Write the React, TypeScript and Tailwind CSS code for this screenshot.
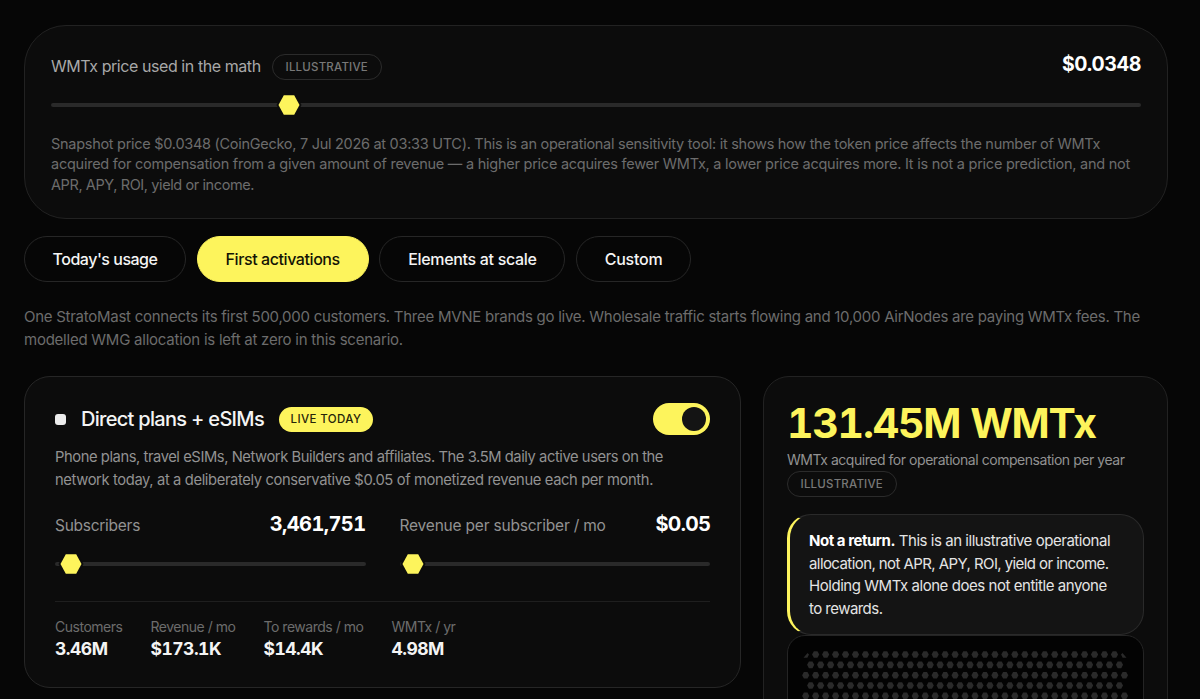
import React, { useState } from 'react';
import clsx from 'clsx';

const TABS = [
  { id: 'today', label: "Today's usage", style: 'w-[162px] tracking-[-0.5px]' },
  { id: 'first', label: 'First activations', style: 'w-[172px] tracking-[-0.42px]' },
  { id: 'scale', label: 'Elements at scale', style: 'w-[186px] tracking-[-0.32px]' },
  { id: 'custom', label: 'Custom', style: 'w-[115px] tracking-[-0.25px]' },
];

const STATS = [
  { label: 'Customers', value: '3.46M' },
  { label: 'Revenue / mo', value: '$173.1K' },
  { label: 'To rewards / mo', value: '$14.4K' },
  { label: 'WMTx / yr', value: '4.98M' },
];

const Line: React.FC<{ className?: string; children: React.ReactNode }> = ({ className, children }) => (
  <span className={clsx('block whitespace-nowrap', className)}>{children}</span>
);

const IllustrativeBadge: React.FC = () => (
  <span className="flex h-[26px] w-[109.5px] items-center justify-center rounded-full border border-[#2b2b2b] pt-px text-[11.5px] font-medium tracking-[0.2px] text-[#787878]">
    ILLUSTRATIVE
  </span>
);

// The thumb carries a card-coloured halo so the track looks cut around it
const Slider: React.FC<{ offset: number }> = ({ offset }) => (
  <div className="relative flex h-5 items-center">
    <div className="h-1 w-full rounded-full bg-[#2a2a2a]" />
    <svg className="absolute top-[-1px]" style={{ left: offset - 13 }} width="26" height="22" viewBox="0 0 26 22">
      <polygon points="0.5,11 7,-1 19,-1 25.5,11 19,23 7,23" fill="#0c0c0c" />
      <polygon points="2.5,11 7.8,1.2 18.2,1.2 23.5,11 18.2,20.8 7.8,20.8" fill="#fdf45c" />
    </svg>
  </div>
);

const hex = (cx: number, cy: number) =>
  `${cx - 3.6},${cy} ${cx - 1.8},${cy - 3.3} ${cx + 1.8},${cy - 3.3} ${cx + 3.6},${cy} ${cx + 1.8},${cy + 3.3} ${cx - 1.8},${cy + 3.3}`;

const HexField: React.FC = () => (
  <svg width="326" height="60" viewBox="0 0 326 60" fill="#2a2a2a">
    {[0, 1, 2, 3, 4, 5].map((row) =>
      Array.from({ length: row % 2 ? 32 : 33 }, (_, i) => {
        if (row === 0 && (i === 0 || i === 32)) return null;
        const cx = 3.7 + i * 9.96 + (row % 2 ? 4.98 : 0);
        return <polygon key={`${row}-${i}`} points={hex(cx, 4.5 + row * 10.35)} />;
      }),
    )}
    <polygon points="1.5,7.8 5.5,3 7,4.5 5.4,7.8" />
    <polygon points="324.5,7.8 320.5,3 319,4.5 320.6,7.8" />
  </svg>
);

const PriceCard: React.FC = () => (
  <section className="h-[194px] rounded-[42px] border border-[#222222] bg-[#0c0c0c] px-[26px] pt-[26px]">
    <div className="flex h-[30px] items-center justify-between">
      <div className="flex items-center gap-[11px]">
        <Line className="-mt-0.5 w-[210px] text-[16px] tracking-[-0.43px] text-[#a8a8a8]">WMTx price used in the math</Line>
        <IllustrativeBadge />
      </div>
      <Line className="-mt-1 text-[19.5px] font-bold tracking-[-0.55px] text-white">$0.0348</Line>
    </div>
    <div className="mt-[13px]">
      <Slider offset={237.5} />
    </div>
    <p className="mt-[19px] text-[14.5px] leading-[20.4px] text-[#6c6c6c]">
      <Line className="tracking-[-0.28px]">Snapshot price $0.0348 (CoinGecko, 7 Jul 2026 at 03:33 UTC). This is an operational sensitivity tool: it shows how the token price affects the number of WMTx</Line>
      <Line className="tracking-[-0.245px]">acquired for compensation from a given amount of revenue — a higher price acquires fewer WMTx, a lower price acquires more. It is not a price prediction, and not</Line>
      <Line className="tracking-[-0.4px]">APR, APY, ROI, yield or income.</Line>
    </p>
  </section>
);

const ScenarioTabs: React.FC = () => {
  const [active, setActive] = useState('first');

  return (
    <div className="mt-[17px] flex gap-[10.7px]">
      {TABS.map((tab) => (
        <button
          key={tab.id}
          onClick={() => setActive(tab.id)}
          className={clsx(
            'h-[46px] shrink-0 rounded-full border text-[16px] font-medium whitespace-nowrap',
            tab.style,
            active === tab.id ? 'border-[#fdf45c] bg-[#fdf45c] text-[#141405]' : 'border-[#262626] text-[#f4f4f4]',
          )}
        >
          {tab.label}
        </button>
      ))}
    </div>
  );
};

const PlansCard: React.FC = () => {
  const [enabled, setEnabled] = useState(true);

  return (
    <section className="h-[312px] w-[717px] rounded-[26px] border border-[#262626] bg-[#0c0c0c] px-[30px] pt-[26px]">
      <div className="flex h-8 items-center">
        <span className="h-[11px] w-[11px] rounded-[3px] bg-[#ececec]" />
        <Line className="ml-[15px] w-[184px] text-[20px] font-medium tracking-[-0.7px] text-[#f4f4f4]">Direct plans + eSIMs</Line>
        <span className="ml-[14px] flex h-[25px] w-[94px] items-center justify-center rounded-full bg-[#fdf45c] pt-px text-[11.5px] font-medium tracking-[0.4px] text-[#26240a]">
          LIVE TODAY
        </span>
        <button
          onClick={() => setEnabled(!enabled)}
          className={clsx(
            'ml-auto flex h-8 w-[57.5px] items-center rounded-full p-1',
            enabled ? 'justify-end bg-[#fdf45c]' : 'justify-start bg-[#2a2a2a]',
          )}
        >
          <span className="h-6 w-6 rounded-full bg-[#141414]" />
        </button>
      </div>
      <p className="mt-[11px] text-[14.75px] leading-[22.5px] text-[#929292]">
        <Line className="tracking-[-0.44px]">Phone plans, travel eSIMs, Network Builders and affiliates. The 3.5M daily active users on the</Line>
        <Line className="tracking-[-0.38px]">network today, at a deliberately conservative $0.05 of monetized revenue each per month.</Line>
      </p>
      <div className="mt-[19px] grid grid-cols-2 gap-[34px]">
        <div>
          <div className="flex h-[28px] items-center justify-between">
            <Line className="mt-1 text-[15.5px] tracking-[-0.27px] text-[#929292]">Subscribers</Line>
            <Line className="text-[20px] font-bold tracking-[-0.6px] text-white tabular-nums">3,461,751</Line>
          </div>
          <div className="mt-[16px]">
            <Slider offset={15.5} />
          </div>
        </div>
        <div>
          <div className="flex h-[28px] items-center justify-between">
            <Line className="mt-1 text-[15.5px] tracking-[-0.2px] text-[#929292]">Revenue per subscriber / mo</Line>
            <Line className="text-[20px] font-bold tracking-[-0.75px] text-white">$0.05</Line>
          </div>
          <div className="mt-[16px]">
            <Slider offset={13.2} />
          </div>
        </div>
      </div>
      <div className="mt-[27px] flex gap-[28px] border-t border-[#1f1f1f] pt-[14px]">
        {STATS.map((stat) => (
          <div key={stat.label}>
            <Line className="text-[14px] leading-[22px] tracking-[-0.48px] text-[#6c6c6c]">{stat.label}</Line>
            <Line className="text-[17.5px] leading-[22px] font-bold tracking-[-0.5px] text-[#f4f4f4] tabular-nums">{stat.value}</Line>
          </div>
        ))}
      </div>
    </section>
  );
};

const ResultCard: React.FC = () => (
  <aside className="h-[420px] w-[405px] rounded-[26px] border border-[#222222] bg-[#0c0c0c] px-[23px] pt-[20px]">
    <Line className="text-[41px] leading-[52px] font-bold tracking-[-1.2px] text-[#fdf45c] tabular-nums">131.45M WMTx</Line>
    <Line className="text-[14px] leading-[22px] tracking-[-0.46px] text-[#929292]">WMTx acquired for operational compensation per year</Line>
    <div>
      <IllustrativeBadge />
    </div>
    <div className="mt-[17px] h-[121px] rounded-[24px] border border-l-[3px] border-[#2a2a2a] border-l-[#fdf45c] bg-[#141414] pt-[15px] pl-[19px] text-[15px] leading-[22.5px] text-[#e4e4e4]">
      <Line className="tracking-[-0.46px]"><b className="font-bold text-white">Not a return.</b> This is an illustrative operational</Line>
      <Line className="tracking-[-0.58px]">allocation, not APR, APY, ROI, yield or income.</Line>
      <Line className="tracking-[-0.45px]">Holding WMTx alone does not entitle anyone</Line>
      <Line className="tracking-[-0.54px]">to rewards.</Line>
    </div>
    <div className="h-[140px] rounded-[18px] border border-[#242424] bg-[#030303] pt-[14px] pl-[14px]">
      <HexField />
    </div>
  </aside>
);

export default function App() {
  return (
    <main className="h-[699px] overflow-hidden bg-[#060606] pt-[25px] pr-8 pl-6 font-['Inter',sans-serif] antialiased">
      <PriceCard />
      <ScenarioTabs />
      <p className="mt-[24px] text-[15px] leading-[22.5px] text-[#6c6c6c]">
        <Line className="tracking-[-0.265px]">One StratoMast connects its first 500,000 customers. Three MVNE brands go live. Wholesale traffic starts flowing and 10,000 AirNodes are paying WMTx fees. The</Line>
        <Line className="tracking-[-0.24px]">modelled WMG allocation is left at zero in this scenario.</Line>
      </p>
      <div className="mt-[25px] flex justify-between">
        <PlansCard />
        <ResultCard />
      </div>
    </main>
  );
}
